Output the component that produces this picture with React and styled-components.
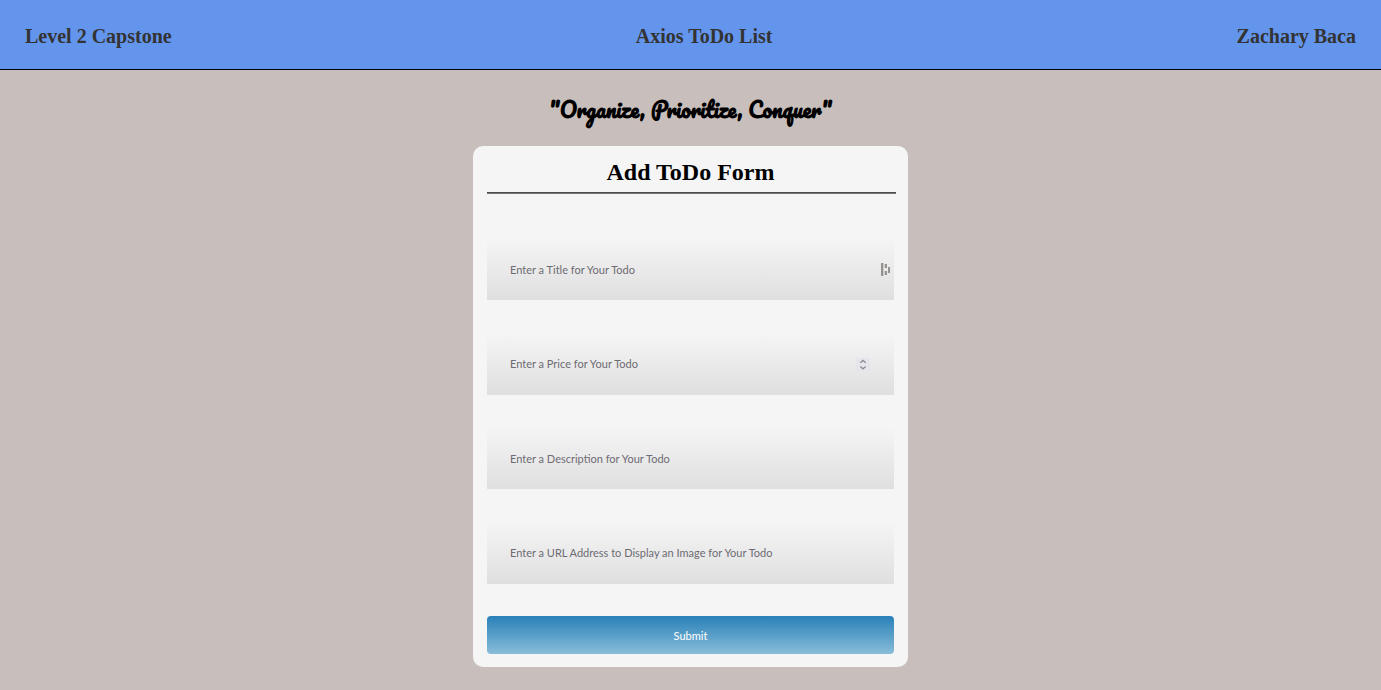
import React from "react";
import styled, { createGlobalStyle } from "styled-components";

const GlobalStyle = createGlobalStyle`
  *, *::before, *::after { box-sizing: border-box; }
  body {
    margin: 0;
    min-height: 100vh;
    background: #c8bfbd;
    font-family: "Liberation Serif", "Times New Roman", serif;
    color: #000;
  }
`;

const Header = styled.header`
  display: flex;
  align-items: center;
  justify-content: space-between;
  min-height: 70px;
  padding: 2px 25px 0;
  background: #6495ed;
  border-bottom: 1px solid #000;
`;

const HeaderText = styled.h1`
  margin: 0;
  font-size: 20px;
  line-height: 24px;
  color: #333;
`;

const Main = styled.main`
  display: flex;
  flex-direction: column;
  align-items: center;
  padding: 20px 16px 23px;
`;

const Motto = styled.h2`
  margin: 0 0 16px;
  font-family: Pacifico, cursive;
  font-size: 21px;
  font-weight: 700;
  line-height: 40px;
`;

const Card = styled.form`
  width: 100%;
  max-width: 435px;
  padding: 12px 14px 13px;
  background: #f5f5f5;
  border-radius: 10px;
`;

const CardTitle = styled.h2`
  margin: 0;
  font-size: 24px;
  line-height: 28px;
  text-align: center;
`;

const Divider = styled.hr`
  height: 2px;
  margin: 6px -2px 44px 0;
  border: 0;
  border-top: 1px solid #4c4c4c;
  border-bottom: 1px solid #777;
`;

const Fields = styled.div`
  display: flex;
  flex-direction: column;
  justify-content: space-between;
  min-height: 346px;
  margin-bottom: 32px;
`;

const Field = styled.label`
  position: relative;
  display: block;
`;

const TextBox = styled.input`
  display: block;
  width: 100%;
  height: 62px;
  padding: 0 23px;
  border: 0;
  border-radius: 0;
  background: linear-gradient(#f5f5f5, #dfdfdf);
  font-family: Lato, Tahoma, sans-serif;
  font-size: 11px;
  color: #333;
  appearance: textfield;

  &::placeholder { color: #6d6b73; opacity: 1; }
  &::-webkit-inner-spin-button { display: none; }
`;

const FieldIcon = styled.svg`
  position: absolute;
  top: 25px;
  right: ${({ $inset }) => $inset}px;
  pointer-events: none;
`;

const SubmitButton = styled.button`
  display: block;
  width: 100%;
  height: 38px;
  padding: 0;
  border: 0;
  border-radius: 4px;
  background: linear-gradient(#2980b9, #89bdd8);
  font-family: Lato, Tahoma, sans-serif;
  font-size: 11px;
  color: #fff;
  cursor: pointer;
`;

function AutofillIcon() {
  return (
    <FieldIcon $inset={4} width="9" height="13" viewBox="0 0 9 13" fill="#96928f" aria-hidden="true">
      <rect x="0" y="0" width="2" height="13" />
      <rect x="2" y="0" width="1" height="13" opacity=".35" />
      <rect x="4" y="1" width="2" height="4" />
      <rect x="4" y="8" width="2" height="4" />
      <rect x="3" y="1" width="1" height="4" opacity=".25" />
      <rect x="3" y="8" width="1" height="4" opacity=".25" />
      <rect x="7" y="4" width="2" height="6" />
    </FieldIcon>
  );
}

function StepperIcon() {
  return (
    <FieldIcon $inset={24} width="14" height="14" viewBox="0 0 14 14" aria-hidden="true">
      <rect width="14" height="13" fill="#e6e5eb" />
      <path
        d="M4.3 4.8 7 2.4l2.7 2.4M4.3 8.4 7 10.8l2.7-2.4"
        fill="none"
        stroke="#8d8c98"
        strokeWidth="1.3"
      />
    </FieldIcon>
  );
}

const fields = [
  { name: "title", type: "text", hint: "Enter a Title for Your Todo", icon: <AutofillIcon /> },
  { name: "price", type: "number", hint: "Enter a Price for Your Todo", icon: <StepperIcon /> },
  { name: "description", type: "text", hint: "Enter a Description for Your Todo" },
  { name: "imgUrl", type: "text", hint: "Enter a URL Address to Display an Image for Your Todo" },
];

export default function App() {
  return (
    <>
      <GlobalStyle />
      <Header>
        <HeaderText>Level 2 Capstone</HeaderText>
        <HeaderText>Axios ToDo List</HeaderText>
        <HeaderText>Zachary Baca</HeaderText>
      </Header>
      <Main>
        <Motto>"Organize, Prioritize, Conquer"</Motto>
        <Card onSubmit={(event) => event.preventDefault()}>
          <CardTitle>Add ToDo Form</CardTitle>
          <Divider />
          <Fields>
            {fields.map(({ name, type, hint, icon }) => (
              <Field key={name}>
                <TextBox name={name} type={type} placeholder={hint} aria-label={hint} />
                {icon}
              </Field>
            ))}
          </Fields>
          <SubmitButton type="submit">Submit</SubmitButton>
        </Card>
      </Main>
    </>
  );
}
